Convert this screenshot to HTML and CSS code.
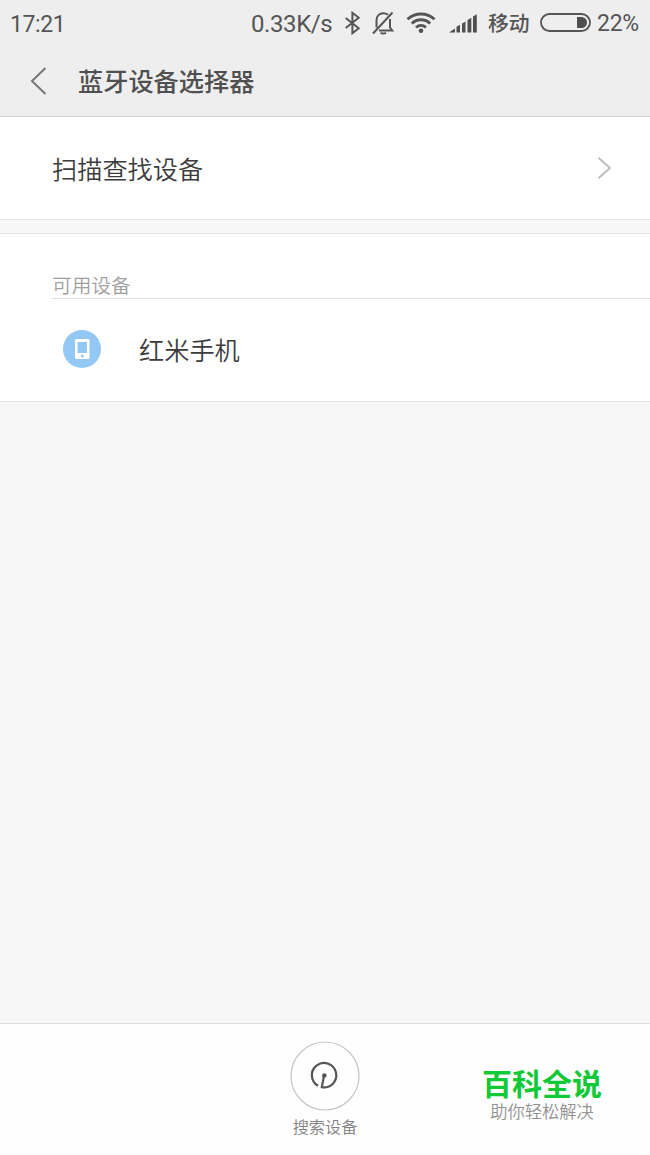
FILE: index.html
```html
<!DOCTYPE html>
<html lang="zh-CN">
<head>
<meta charset="utf-8">
<title>蓝牙设备选择器</title>
<link rel="stylesheet" href="styles.css">
</head>
<body>
<div class="screen">
  <header class="top">
    <div class="status">
      <span class="clock">17:21</span>
      <span class="speed">0.33K/s</span>
      <svg class="bluetooth" width="17" height="24" viewBox="0 0 17 24"><path d="M1.700 7l13 10.200-6.300 5V1.800l6.300 5L1.700 17"/></svg>
      <svg class="bell" width="23" height="24" viewBox="0 0 23 24"><path d="M1 22.500L20.500 1.500M4.500 16.500V9.500C4.500 5 7.300 2.200 11.300 2.200c2 0 3.600.6 4.700 1.600M18 8v8.500l2.200 3H7M8.500 21.800q2.800 1.200 5.600 0"/></svg>
      <svg class="wifi" width="30" height="22" viewBox="0 0 30 22"><path d="M1.500 7.300C9 .2 21 .2 28.500 7.300M5.800 11.500c5.200-5 13.200-5 18.400 0M10 15.500c3-2.800 7-2.800 10 0"/><circle cx="15" cy="18.800" r="2.300"/></svg>
      <svg class="signal" width="29" height="19" viewBox="0 0 29 19"><path d="M0 18.500l6-4v4zM7.500 12.800l3.500-2v7.700H7.500zM13 9.500l3.500-2v11H13zM18.500 6l3.800-2.200v14.700h-3.800zM24 2.500l3.800-2.300v18.300H24z"/></svg>
      <span class="carrier">移动</span>
      <svg class="battery" width="52" height="20" viewBox="0 0 52 20"><rect x="1" y="1" width="49" height="17" rx="8.500"/><path d="M37 4h4.500a5.500 5.500 0 0 1 0 11H37z"/></svg>
      <span class="level">22%</span>
    </div>
    <div class="titlebar">
      <svg class="back" width="18" height="30" viewBox="0 0 18 30"><path d="M15.500 2L2 15l13.500 13"/></svg>
      <h1>蓝牙设备选择器</h1>
    </div>
  </header>
  <main>
    <section class="scan">
      <span class="label">扫描查找设备</span>
      <svg class="chevron" width="15" height="24" viewBox="0 0 15 24"><path d="M1.500 1.800L13 12 1.500 22.200"/></svg>
    </section>
    <section class="available">
      <h2>可用设备</h2>
      <div class="device">
        <svg width="38" height="38" viewBox="0 0 38 38"><circle class="disc" cx="19" cy="19" r="19"/><rect class="phone" x="12" y="9" width="14.500" height="20" rx="1.500"/><path class="disc" d="M14.500 12h9.500v11h-9.500z"/><circle class="disc" cx="19.200" cy="26" r="1.500"/></svg>
        <span class="label">红米手机</span>
      </div>
    </section>
  </main>
  <footer>
    <svg class="search" width="70" height="70" viewBox="0 0 70 70"><circle class="ring" cx="35" cy="35" r="34"/><path d="M28 44.800A12.200 12.200 0 1 1 31.800 46.200L34 35"/><circle class="dot" cx="34.300" cy="34.500" r="2.300"/></svg>
    <span class="caption">搜索设备</span>
    <div class="brand"><strong>百科全说</strong><span>助你轻松解决</span></div>
  </footer>
</div>
</body>
</html>
```
FILE: styles.css
```css
* { box-sizing: border-box; }
body { margin: 0; font-family: "Noto Sans CJK SC", sans-serif; color: #3c3c3c; }
svg { display: block; flex: none; fill: none; stroke: #555; stroke-width: 2; }
h1, h2 { margin: 0; }
.screen { display: flex; flex-direction: column; width: 650px; height: 1155px; background: #f7f7f7; overflow: hidden; }
.top { height: 117px; background: #eee; border-bottom: 1px solid #d3d3d3; }
.status { display: flex; align-items: center; height: 46px; padding-left: 10px; font: 23px/46px Roboto, "Noto Sans CJK SC", sans-serif; color: #555; white-space: nowrap; }
.clock { width: 241px; padding-top: 3px; letter-spacing: -0.400px; }
.speed { width: 93px; padding-top: 2px; font-size: 24px; letter-spacing: -0.400px; }
.bell { margin-left: 11px; }
.wifi { margin-left: 11px; stroke-width: 2.800; }
.signal { margin-left: 13px; }
.wifi circle, .signal, .battery path { fill: #4f4f4f; stroke: none; }
.carrier { width: 52px; margin-left: 10px; padding-top: 2px; font-size: 20.800px; font-weight: 500; }
.battery { stroke-width: 1.800; }
.level { margin-left: 5px; padding-top: 2px; font-size: 23px; letter-spacing: -0.300px; }
.titlebar { display: flex; align-items: center; height: 70px; padding-left: 30px; }
.back { stroke: #777; }
h1 { margin-left: 30px; margin-top: -2px; font-size: 25.200px; font-weight: 500; line-height: 36px; color: #505050; }
.scan { display: flex; align-items: center; justify-content: space-between; height: 103px; padding: 0 38px 0 52px; background: #fff; border-bottom: 1px solid #e5e5e5; }
.label { font-size: 25.200px; font-weight: 350; line-height: 36px; }
.chevron { stroke: #bdbdbd; }
.available { margin-top: 13px; height: 169px; padding: 36px 0 0 52px; background: #fff; border: solid #e5e5e5; border-width: 1px 0; }
h2 { height: 29px; font-size: 19.700px; font-weight: 350; line-height: 29px; color: #a0a0a0; border-bottom: 1px solid #dedede; }
.device { display: flex; align-items: center; gap: 38px; height: 100px; padding-left: 11px; }
.disc { fill: #93c8f4; stroke: none; }
.phone { fill: #fff; stroke: none; }
footer { position: relative; display: flex; flex-direction: column; align-items: center; height: 132px; margin-top: auto; padding-top: 17px; background: #fefefe; border-top: 1px solid #dedede; }
.search { stroke-width: 2.200; }
.ring { stroke: #c5c5c5; stroke-width: 1.200; }
.dot { fill: #555; stroke: none; }
.caption { margin-top: 3px; font-size: 16.200px; font-weight: 350; line-height: 24px; color: #828282; }
.brand { position: absolute; top: 43px; left: 482px; display: flex; flex-direction: column; align-items: center; width: 120px; white-space: nowrap; }
.brand strong { font-size: 30px; line-height: 31px; font-weight: 700; color: #11c936; }
.brand span { font-size: 17.300px; line-height: 25px; font-weight: 350; color: #929292; }
```
